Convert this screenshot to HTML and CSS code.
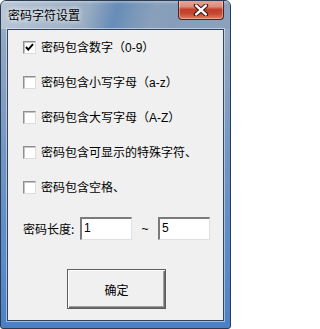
FILE: index.html
```html
<!DOCTYPE html>
<html>
<head>
<meta charset="utf-8">
<link rel="stylesheet" href="styles.css">
</head>
<body>
<div class="window">
  <div class="titlebar">
    <span class="title">密码字符设置</span>
    <div class="close">
      <svg width="16" height="12" viewBox="0 0 16 12">
        <path d="M3 1.5 L13 10.5 M13 1.5 L3 10.5" stroke="#3a1d1a" stroke-width="4.4" stroke-linecap="round" fill="none"/>
        <path d="M3.2 1.6 L12.8 10.4 M12.8 1.6 L3.2 10.4" stroke="#ffffff" stroke-width="2.4" stroke-linecap="round" fill="none"/>
      </svg>
    </div>
  </div>
  <div class="client">
    <div class="options">
      <label class="row"><span class="cb checked"><svg width="9" height="9" viewBox="0 0 9 9"><path d="M1 4 L3.3 6.6 L8 1.2" stroke="#000" stroke-width="2" fill="none"/></svg></span><span class="lbl">密码包含数字（0-9）</span></label>
      <label class="row"><span class="cb"></span><span class="lbl">密码包含小写字母（a-z）</span></label>
      <label class="row"><span class="cb"></span><span class="lbl">密码包含大写字母（A-Z）</span></label>
      <label class="row"><span class="cb"></span><span class="lbl">密码包含可显示的特殊字符、</span></label>
      <label class="row"><span class="cb"></span><span class="lbl">密码包含空格、</span></label>
    </div>
    <div class="length">
      <span class="lenlbl">密码长度:</span>
      <div class="field">1</div>
      <span class="tilde">~</span>
      <div class="field">5</div>
    </div>
    <div class="btnrow">
      <div class="btn">确定</div>
    </div>
  </div>
</div>
</body>
</html>
```
FILE: styles.css
```css
html, body {
  margin: 0;
  padding: 0;
  background: #ffffff;
}
body {
  font-family: "Liberation Sans", "Noto Sans CJK SC", sans-serif;
  font-size: 12px;
  color: #000;
}
.window {
  position: relative;
  width: 231px;
  height: 329px;
  box-sizing: border-box;
  border: 1px solid #2c3b52;
  border-radius: 6px 6px 3px 3px;
  background: linear-gradient(180deg, #9fb3c9 0%, #8ea6c2 15%, #6f95c4 50%, #5688c8 85%, #4c80c6 100%);
  padding: 0 6px 7px 6px;
  display: flex;
  flex-direction: column;
  overflow: hidden;
}
.titlebar {
  height: 28px;
  margin: 0 -6px;
  padding-left: 7px;
  display: flex;
  align-items: center;
  flex: none;
  background:
    linear-gradient(180deg, rgba(255,255,255,0.35) 0px, rgba(255,255,255,0) 3px),
    linear-gradient(105deg, rgba(255,255,255,0) 38%, rgba(70,120,180,0.55) 50%, rgba(70,120,180,0.25) 58%, rgba(255,255,255,0) 66%),
    linear-gradient(90deg, #b7c6d6 0%, #a2b4c8 25%, #8ea4bc 50%, #869eba 75%, #8aa2be 100%);
}
.title {
  font-family: "Noto Sans CJK SC", sans-serif;
  font-size: 12px;
  color: #000;
  margin-top: -1px;
  text-shadow: 0 0 4px rgba(255,255,255,0.95), 0 0 8px rgba(255,255,255,0.8);
}
.close {
  position: absolute;
  top: -1px;
  right: 6px;
  width: 46px;
  height: 20px;
  box-sizing: border-box;
  border: 1px solid #4a2420;
  border-top: none;
  border-radius: 0 0 4px 4px;
  background: linear-gradient(180deg, #e8aa9c 0%, #dc8c7a 35%, #c23f2a 50%, #c44630 70%, #e27c5e 100%);
  box-shadow: inset 0 0 0 1px rgba(255,255,255,0.35);
  display: flex;
  align-items: center;
  justify-content: center;
}
.client {
  flex: 1;
  background: #f0f0f0;
  border: 1px solid #33445c;
  box-shadow: 0 0 0 1px rgba(255,255,255,0.45);
  display: flex;
  flex-direction: column;
}
.options {
  display: flex;
  flex-direction: column;
}
.row {
  height: 35px;
  display: flex;
  align-items: center;
  padding-left: 15px;
  gap: 5px;
}
.cb {
  width: 13px;
  height: 13px;
  box-sizing: border-box;
  background: #fff;
  border-top: 1px solid #8e8f8f;
  border-left: 1px solid #8e8f8f;
  border-right: 1px solid #dcdcdc;
  border-bottom: 1px solid #dcdcdc;
  box-shadow: inset 1px 1px 0 #c4c4c4;
  display: flex;
  align-items: center;
  justify-content: center;
}
.lbl {
  font-family: "Liberation Sans", "Noto Sans CJK SC", sans-serif;
  line-height: 14px;
}
.length {
  display: flex;
  align-items: center;
  margin-top: 12px;
  padding-left: 15px;
}
.lenlbl {
  width: 57px;
  font-family: "Noto Sans CJK SC", sans-serif;
}
.field {
  width: 52px;
  height: 23px;
  box-sizing: border-box;
  background: #fff;
  border-top: 2px solid #7a7a7a;
  border-left: 2px solid #7a7a7a;
  border-right: 1px solid #e0e0e0;
  border-bottom: 1px solid #e0e0e0;
  padding-left: 2px;
  line-height: 18px;
  font-size: 12px;
}
.tilde {
  width: 26px;
  text-align: center;
  font-size: 12px;
}
.btnrow {
  display: flex;
  padding-left: 59px;
  margin-top: 29px;
}
.btn {
  width: 99px;
  height: 40px;
  box-sizing: border-box;
  background: #f0f0f0;
  border: 1px solid #5e5e5e;
  box-shadow: inset 1px 1px 0 #ffffff, inset -1px -1px 0 #6a6a6a, inset -2px -2px 0 #a0a0a0;
  display: flex;
  align-items: center;
  justify-content: center;
  font-family: "Noto Sans CJK SC", sans-serif;
}
```
